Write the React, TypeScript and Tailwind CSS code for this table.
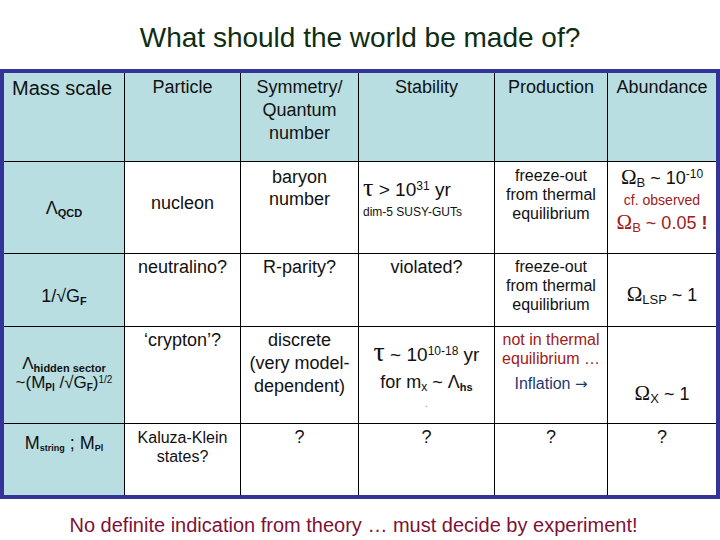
export default function App() {
  const teal = "bg-[#b8dee2]";
  const cell = "bg-white text-center text-[#111]";
  const omega = "font-['Liberation_Serif',serif] text-[21px]";

  return (
    <div className="w-[720px] h-[540px] bg-white font-['Liberation_Sans',Arial,sans-serif] text-[#111]">
      <div className="h-[69px] pt-[22px] text-center text-[28px] leading-[32px] text-[#0f2d12]">
        What should the world be made of?
      </div>

      <div className="grid grid-cols-[120px_115px_117px_135px_112px_108px] grid-rows-[88px_91px_72px_96px_71px] gap-px bg-black border-4 border-[#333399]">
        {/* header */}
        <div className={`${teal} pl-[8px] pt-[3px] text-[20px] leading-[24px]`}>Mass scale</div>
        <div className={`${teal} text-center pt-[3px] text-[18px] leading-[23px]`}>Particle</div>
        <div className={`${teal} text-center pt-[3px] text-[18px] leading-[23px]`}>
          Symmetry/
          <br />
          Quantum
          <br />
          number
        </div>
        <div className={`${teal} text-center pt-[3px] text-[18px] leading-[23px]`}>Stability</div>
        <div className={`${teal} text-center pt-[3px] text-[18px] leading-[23px]`}>Production</div>
        <div className={`${teal} text-center pt-[3px] text-[18px] leading-[23px]`}>Abundance</div>

        {/* row 1 */}
        <div className={`${teal} text-center pt-[34px] text-[18px] leading-[24px]`}>
          Λ<sub className="text-[11px] font-bold">QCD</sub>
        </div>
        <div className={`${cell} pt-[30px] text-[18px] leading-[22px] text-[#7d1838]`}>nucleon</div>
        <div className={`${cell} pt-[4px] text-[18px] leading-[22px]`}>
          baryon
          <br />
          number
        </div>
        <div className="bg-white pl-[4px] pt-[12px]">
          <div className="text-[19px] leading-[28px] whitespace-nowrap">
            <span className="font-['Liberation_Serif',serif] text-[26px]">τ</span> &gt; 10
            <sup className="text-[12px]">31</sup> yr
          </div>
          <div className="text-[12px] leading-[16px]">dim-5 SUSY-GUTs</div>
        </div>
        <div className={`${cell} pt-[4px] text-[16px] leading-[19px]`}>
          freeze-out
          <br />
          from thermal
          <br />
          equilibrium
        </div>
        <div className={`${cell} pt-[3px]`}>
          <div className="text-[18px] leading-[24px] whitespace-nowrap">
            <span className={omega}>Ω</span>
            <sub className="text-[13px]">B</sub> ~ 10<sup className="text-[12px]">-10</sup>
          </div>
          <div className="text-[14px] leading-[20px] text-[#a02020]">cf. observed</div>
          <div className="text-[18px] leading-[24px] text-[#a02020] whitespace-nowrap">
            <span className={omega}>Ω</span>
            <sub className="text-[13px]">B</sub> ~ 0.05 <span className="font-bold">!</span>
          </div>
        </div>

        {/* row 2 */}
        <div className={`${teal} text-center pt-[30px] text-[18px] leading-[24px]`}>
          1/√G<sub className="text-[11px] font-bold">F</sub>
        </div>
        <div className={`${cell} pt-[2px] text-[18px] leading-[23px]`}>neutralino?</div>
        <div className={`${cell} pt-[2px] text-[18px] leading-[23px]`}>R-parity?</div>
        <div className={`${cell} pt-[2px] text-[18px] leading-[23px]`}>violated?</div>
        <div className={`${cell} pt-[3px] text-[16px] leading-[19px]`}>
          freeze-out
          <br />
          from thermal
          <br />
          equilibrium
        </div>
        <div className={`${cell} pt-[28px] text-[18px] leading-[24px] text-[#1d521f] whitespace-nowrap`}>
          <span className={omega}>Ω</span>
          <sub className="text-[13px]">LSP</sub> ~ 1
        </div>

        {/* row 3 */}
        <div className={`${teal} text-center pt-[27px] text-[17px] whitespace-nowrap`}>
          <div className="leading-[19px]">
            Λ<sub className="text-[11px] font-bold">hidden sector</sub>
          </div>
          <div className="leading-[19px]">
            ~(M<sub className="text-[10px] font-bold">Pl</sub> /√G
            <sub className="text-[10px] font-bold">F</sub>)<sup className="text-[10px]">1/2</sup>
          </div>
        </div>
        <div className={`${cell} pt-[2px] text-[18px] leading-[23px]`}>‘crypton’?</div>
        <div className={`${cell} pt-[2px] text-[18px] leading-[23px]`}>
          discrete
          <br />
          (very model-
          <br />
          dependent)
        </div>
        <div className={`${cell} pt-[11px] whitespace-nowrap`}>
          <div className="text-[19px] leading-[28px]">
            <span className="font-['Liberation_Serif',serif] text-[28px]">τ</span> ~ 10
            <sup className="text-[12px]">10-18</sup> yr
          </div>
          <div className="text-[18px] leading-[26px]">
            for m<sub className="text-[12px]">x</sub> ~ Λ<sub className="text-[11px] font-bold">hs</sub>
          </div>
          <div className="text-[10px] leading-[18px] text-[#888]">.</div>
        </div>
        <div className={`${cell} pt-[3px] text-[16px] leading-[19px]`}>
          <div className="text-[#a02020]">
            not in thermal
            <br />
            equilibrium …
          </div>
          <div className="mt-[6px] text-[#1f3a6e]">
            Inflation <span className="font-['DejaVu_Sans',sans-serif] text-[15px]">→</span>
          </div>
        </div>
        <div className={`${cell} pt-[54px] text-[18px] leading-[24px] text-[#1d521f] whitespace-nowrap`}>
          <span className={omega}>Ω</span>
          <sub className="text-[13px]">X</sub> ~ 1
        </div>

        {/* row 4 */}
        <div className={`${teal} text-center pt-[7px] text-[18px] leading-[24px] whitespace-nowrap`}>
          M<sub className="text-[9px] font-bold">string</sub> ; M<sub className="text-[9px] font-bold">Pl</sub>
        </div>
        <div className={`${cell} pt-[4px] text-[16px] leading-[19px]`}>
          Kaluza-Klein
          <br />
          states?
        </div>
        <div className={`${cell} pt-[2px] text-[18px] leading-[23px]`}>?</div>
        <div className={`${cell} pt-[2px] text-[18px] leading-[23px]`}>?</div>
        <div className={`${cell} pt-[2px] text-[18px] leading-[23px]`}>?</div>
        <div className={`${cell} pt-[2px] text-[18px] leading-[23px]`}>?</div>
      </div>

      <div className="mt-[14px] pr-[13px] text-center text-[20px] leading-[24px] text-[#7d1236]">
        No definite indication from theory … must decide by experiment!
      </div>
    </div>
  );
}
